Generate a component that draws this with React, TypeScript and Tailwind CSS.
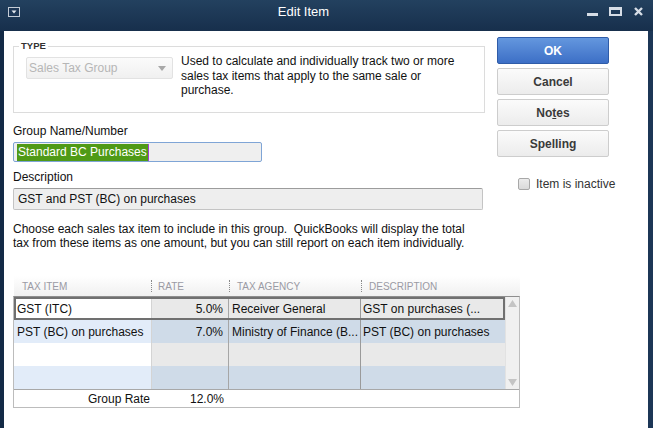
import React from 'react';

type Row = { item: string; rate: string; agency: string; desc: string };

const rows: Row[] = [
  { item: 'GST (ITC)', rate: '5.0%', agency: 'Receiver General', desc: 'GST on purchases (...' },
  { item: 'PST (BC) on purchases', rate: '7.0%', agency: 'Ministry of Finance (B...', desc: 'PST (BC) on purchases' },
  { item: '', rate: '', agency: '', desc: '' },
  { item: '', rate: '', agency: '', desc: '' },
];

function TitleBar() {
  return (
    <div className="h-[31px] bg-gradient-to-b from-[#23415f] to-[#172f4c]">
      <div className="flex h-[24px] items-center pl-[8px] pr-[10px]">
        <svg width="12" height="10" viewBox="0 0 12 10">
          <rect x="0.5" y="0.5" width="11" height="9" fill="#1d3756" stroke="#c4ccd6" />
          <path d="M3.5 3.5h5L6 6.5z" fill="#e6eaef" />
        </svg>
        <div className="flex-1 text-center text-[13px] text-white">Edit Item</div>
        <svg width="56" height="10" viewBox="0 0 56 10">
          <rect x="0" y="6" width="11" height="3" fill="#d6dde6" />
          <rect x="23" y="1.5" width="11" height="6.5" fill="none" stroke="#d6dde6" strokeWidth="2" />
          <rect x="22" y="0" width="13" height="3" fill="#d6dde6" />
          <path d="M48 1l7 7M55 1l-7 7" stroke="#d6dde6" strokeWidth="2.4" />
        </svg>
      </div>
    </div>
  );
}

function SideButton({ children, primary }: { children: React.ReactNode; primary?: boolean }) {
  return (
    <div
      className={
        primary
          ? 'flex h-[27px] items-center justify-center rounded-[2px] border border-[#2f5ca8] bg-gradient-to-b from-[#6497de] to-[#3d6fc6] text-[12px] font-bold text-white'
          : 'flex h-[27px] items-center justify-center rounded-[2px] border border-[#cdcdcd] bg-gradient-to-b from-[#fbfbfb] to-[#ececec] text-[12px] font-bold text-[#3a3a3a]'
      }
    >
      {children}
    </div>
  );
}

function TaxTable() {
  return (
    <div className="mt-[26px] w-[507px]">
      <div className="ml-[1px] flex h-[20px] items-center bg-gradient-to-b from-white to-[#f0f0f0] text-[10px] text-[#9a9aa4]">
        <div className="w-[137px] pl-[8px]">TAX ITEM</div>
        <div className="flex w-[78px] items-center">
          <span className="h-[12px] border-l border-dotted border-[#8a8a8a]" />
          <span className="ml-[6px]">RATE</span>
        </div>
        <div className="flex w-[132px] items-center">
          <span className="h-[12px] border-l border-dotted border-[#8a8a8a]" />
          <span className="ml-[7px]">TAX AGENCY</span>
        </div>
        <div className="flex items-center">
          <span className="h-[12px] border-l border-dotted border-[#8a8a8a]" />
          <span className="ml-[7px]">DESCRIPTION</span>
        </div>
      </div>
      <div className="border border-[#bcbcbc] border-t-[#8e8e8e]">
        <div className="flex">
          <div className="flex w-[491px] flex-col">
            {rows.map((r, i) => {
              const odd = i % 2 === 1;
              const first = odd ? 'bg-[#e2ecf9]' : 'bg-white';
              const rest = odd ? 'bg-[#cfdbe8]' : 'bg-[#e9e9e9]';
              const focus = i === 0;
              return (
                <div
                  key={i}
                  className={
                    focus
                      ? 'flex h-[23px] border-2 border-[#707070] text-[12px] text-[#111]'
                      : 'flex h-[23px] text-[12px] text-[#111]'
                  }
                >
                  <div className={`${focus ? 'w-[136px] pl-[1px]' : 'w-[138px] pl-[3px]'} flex items-center border-r border-[#d4d4d4] ${first}`}>
                    {r.item}
                  </div>
                  <div className={`flex w-[77px] items-center justify-end border-r border-[#a6a6a6] pr-[5px] ${rest}`}>
                    {r.rate}
                  </div>
                  <div className={`flex w-[132px] items-center border-r border-[#9a9a9a] pl-[3px] ${rest}`}>
                    {r.agency}
                  </div>
                  <div className={`flex flex-1 items-center pl-[2px] ${rest}`}>{r.desc}</div>
                </div>
              );
            })}
          </div>
          <div className="flex w-[14px] flex-col items-center justify-between border-l border-[#e2e2e2] bg-[#f0f0f0] py-[3px]">
            <svg width="9" height="7" viewBox="0 0 9 7">
              <path d="M0 7L4.5 0L9 7z" fill="#c4c4c4" />
            </svg>
            <svg width="9" height="7" viewBox="0 0 9 7">
              <path d="M0 0L4.5 7L9 0z" fill="#c4c4c4" />
            </svg>
          </div>
        </div>
        <div className="flex h-[18px] items-center border-t border-[#a8a8a8] bg-white text-[12px] text-[#111]">
          <div className="w-[138px] pr-[2px] text-right">Group Rate</div>
          <div className="w-[77px] pr-[5px] text-right">12.0%</div>
        </div>
      </div>
    </div>
  );
}

export default function App() {
  return (
    <div className="flex h-[428px] w-[653px] flex-col overflow-hidden bg-[#1b3453] font-['Liberation_Sans',Arial,sans-serif]">
      <TitleBar />
      <div className="flex flex-1">
        <div className="w-[4px] bg-[#132a46]" />
        <div className="flex flex-1 flex-col bg-white pl-[9px] pt-[6px] text-[#111]">
          <div className="flex items-start">
            <div className="mt-[4px] w-[472px]">
              <fieldset className="border border-[#dcdcdc] px-0">
                <legend className="ml-[5px] px-[2px] text-[9.5px] font-bold leading-[10px] text-[#333]">TYPE</legend>
                <div className="flex h-[61px] items-start pl-[12px]">
                  <div className="mt-[6px] flex h-[22px] w-[147px] items-center justify-between rounded-[2px] border border-[#e2e2e2] bg-gradient-to-b from-[#fbfbfb] to-[#f0f0f0] pl-[2px] pr-[6px] text-[12px] text-[#b6b6b6]">
                    <span>Sales Tax Group</span>
                    <svg width="8" height="5" viewBox="0 0 8 5">
                      <path d="M0 0h8L4 5z" fill="#a8a8a8" />
                    </svg>
                  </div>
                  <p className="ml-[8px] mt-[3px] w-[290px] text-[12px] leading-[14.5px]">
                    Used to calculate and individually track two or more sales tax items that apply to the same sale or purchase.
                  </p>
                </div>
              </fieldset>
              <div className="mt-[11px] text-[12px] leading-[14px]">Group Name/Number</div>
              <div className="mt-[4px] flex h-[20px] w-[249px] items-center rounded-[2px] border border-[#7fa5d6] bg-[#efefef] pl-[3px]">
                <span className="h-[17px] bg-[#4f9a16] px-[1px] text-[12px] leading-[17px] text-white">Standard BC Purchases</span>
                <span className="h-[17px] w-[1px] bg-[#a040d0]" />
              </div>
              <div className="mt-[8px] text-[12px] leading-[14px]">Description</div>
              <div className="mt-[4px] flex h-[22px] w-[470px] items-center rounded-[2px] border border-[#c4c4c4] border-t-[#9c9c9c] bg-[#eeeeee] pl-[4px] text-[12px]">
                GST and PST (BC) on purchases
              </div>
              <p className="mt-[12px] whitespace-pre text-[12px] leading-[14px]">
                Choose each sales tax item to include in this group.  QuickBooks will display the total
                <br />
                tax from these items as one amount, but you can still report on each item individually.
              </p>
            </div>
            <div className="ml-[12px] flex w-[112px] flex-col gap-[4px]">
              <SideButton primary>OK</SideButton>
              <SideButton>Cancel</SideButton>
              <SideButton>
                No<span className="underline">t</span>es
              </SideButton>
              <SideButton>
                Spellin<span className="underline">g</span>
              </SideButton>
              <div className="ml-[21px] mt-[14px] flex items-center gap-[6px] whitespace-nowrap text-[12px] text-[#333]">
                <span className="h-[12px] w-[12px] shrink-0 rounded-[2px] border border-[#a8a8a8] bg-gradient-to-b from-[#ececec] to-[#dadada]" />
                <span>Item is inactive</span>
              </div>
            </div>
          </div>
          <TaxTable />
        </div>
        <div className="w-[5px] bg-[#1c3656]" />
      </div>
    </div>
  );
}
